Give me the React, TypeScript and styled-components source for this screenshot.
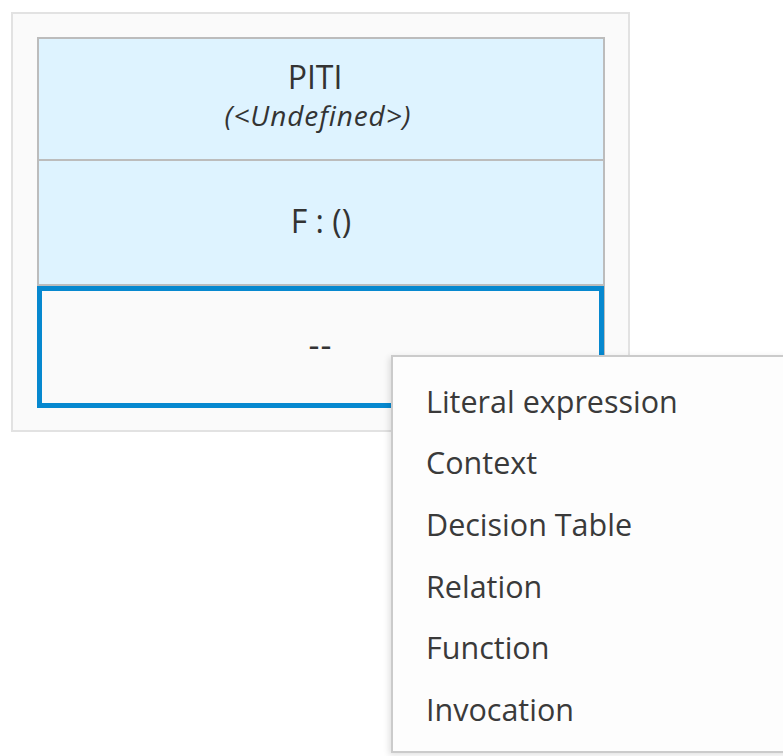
import React from "react";
import styled, { createGlobalStyle } from "styled-components";

const GlobalStyle = createGlobalStyle`
  html, body {
    margin: 0;
    padding: 0;
    background: #ffffff;
  }
  body {
    font-family: "Open Sans", "Noto Sans", sans-serif;
    color: #363636;
  }
`;

const Page = styled.div`
  position: relative;
  width: 783px;
  height: 756px;
  overflow: hidden;
  box-sizing: border-box;
  padding: 12px 0 0 11px;
  background: #ffffff;
`;

const Canvas = styled.div`
  box-sizing: border-box;
  width: 619px;
  height: 420px;
  border: 2px solid #e2e2e2;
  background: #fafafa;
  padding: 23px 24px;
`;

const Table = styled.div`
  box-sizing: border-box;
  width: 568px;
  display: flex;
  flex-direction: column;
  border: 2px solid #bcbcbc;
  border-bottom: none;
`;

const HeaderCell = styled.div<{ $h: number; $shift?: number }>`
  box-sizing: border-box;
  height: ${(p) => p.$h}px;
  background: #def3ff;
  border-bottom: 2px solid #bcbcbc;
  display: flex;
  flex-direction: column;
  align-items: center;
  justify-content: center;
  padding-bottom: ${(p) => p.$shift ?? 0}px;
`;

const Name = styled.div`
  font-size: 32px;
  line-height: 36px;
  margin-right: 12px;
  color: #333333;
`;

const TypeRef = styled.div`
  font-size: 28px;
  line-height: 32px;
  font-style: italic;
  color: #333333;
  letter-spacing: 0.9px;
  margin-top: 4px;
  margin-right: 6px;
`;

const Signature = styled.div`
  font-size: 32px;
  line-height: 36px;
  color: #333333;
`;

const SelectedCell = styled.div`
  box-sizing: border-box;
  height: 122px;
  margin: 0 -1px -2px -2px;
  border: 5px solid #0688cf;
  background: #fafafa;
  display: flex;
  align-items: center;
  justify-content: center;
  font-size: 34px;
  letter-spacing: 1px;
  color: #333333;
  padding-bottom: 6px;
`;

const Menu = styled.ul`
  position: absolute;
  left: 391px;
  top: 355px;
  width: 420px;
  height: 398px;
  box-sizing: border-box;
  margin: 0;
  padding: 13px 0 0 0;
  list-style: none;
  background: #fdfdfd;
  border: 2px solid #cbcbcb;
  box-shadow: -2px 2px 6px rgba(0, 0, 0, 0.12);
`;

const MenuItem = styled.li`
  height: 61.6px;
  display: flex;
  align-items: center;
  padding-left: 33px;
  font-size: 30.5px;
  color: #3a3a3a;
`;

const items = [
  "Literal expression",
  "Context",
  "Decision Table",
  "Relation",
  "Function",
  "Invocation",
];

export default function App() {
  return (
    <>
      <GlobalStyle />
      <Page>
        <Canvas>
          <Table>
            <HeaderCell $h={122} $shift={8}>
              <Name>PITI</Name>
              <TypeRef>(&lt;Undefined&gt;)</TypeRef>
            </HeaderCell>
            <HeaderCell $h={125} $shift={3}>
              <Signature>F : ()</Signature>
            </HeaderCell>
            <SelectedCell>--</SelectedCell>
          </Table>
        </Canvas>
        <Menu>
          {items.map((it) => (
            <MenuItem key={it}>{it}</MenuItem>
          ))}
        </Menu>
      </Page>
    </>
  );
}
